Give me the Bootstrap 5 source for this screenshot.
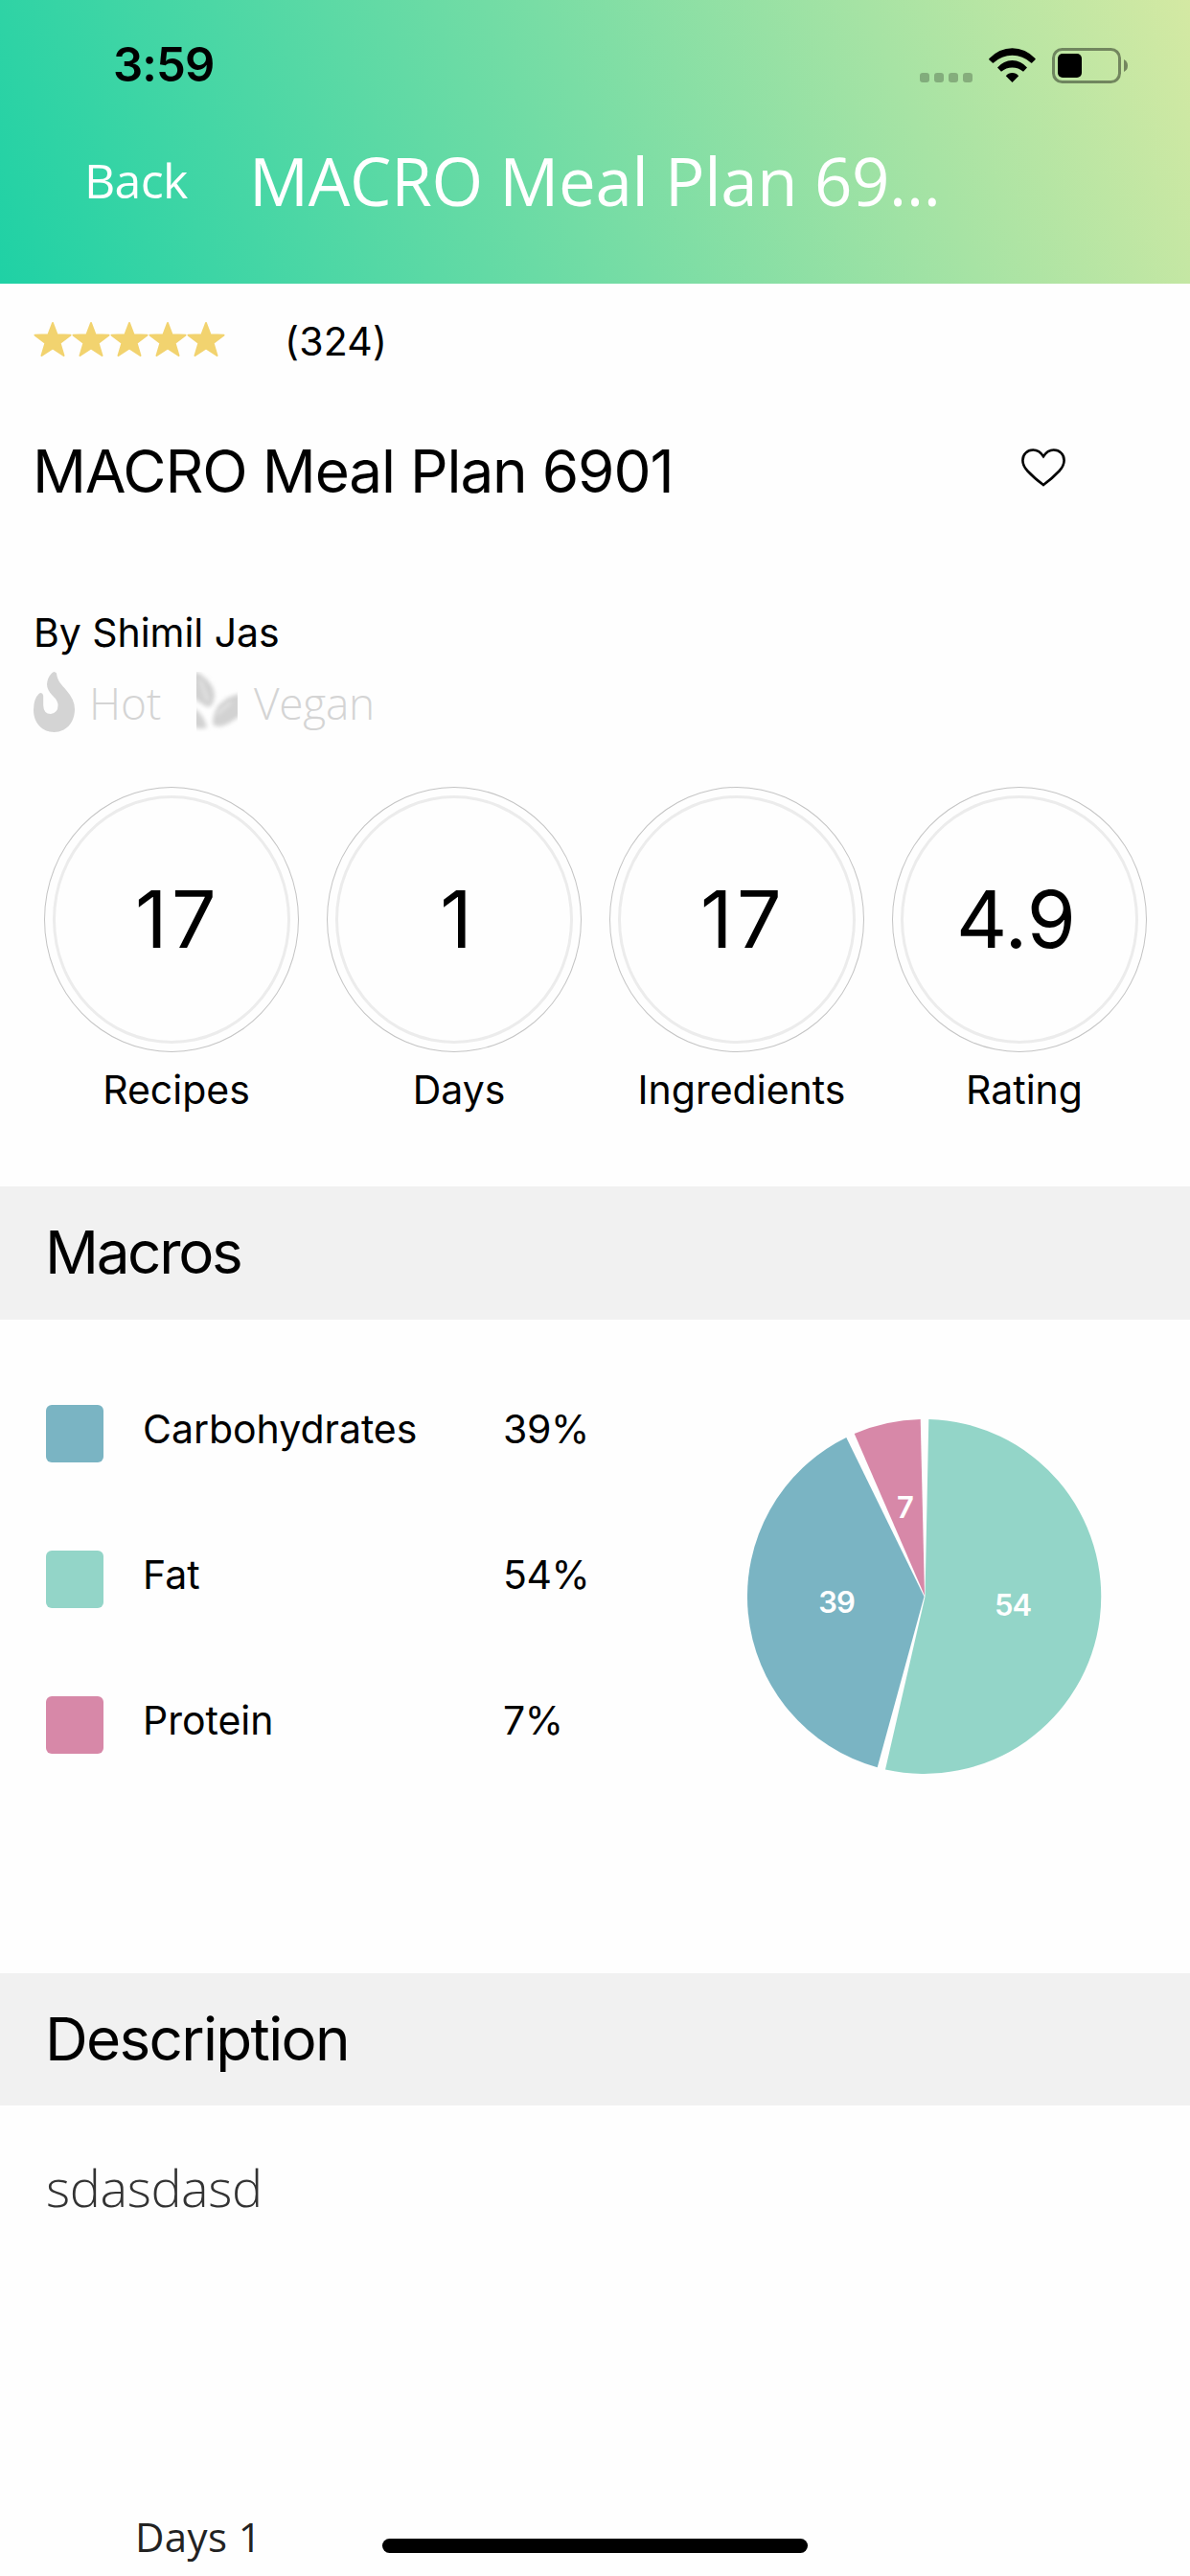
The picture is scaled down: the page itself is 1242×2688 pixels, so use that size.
<!DOCTYPE html>
<html lang="en">
<head>
<meta charset="utf-8">
<meta name="viewport" content="width=device-width, initial-scale=1">
<title>MACRO Meal Plan 6901</title>
<link href="https://cdn.jsdelivr.net/npm/bootstrap@5.3.0/dist/css/bootstrap.min.css" rel="stylesheet">
<style>
  body { width: 1242px; height: 2688px; overflow: hidden; background: #fefefe; color: #000; font-family: Inter, "Liberation Sans", sans-serif; font-size: 41px; line-height: 60px; }
  svg { display: block; flex: none; }
  .open { font-family: "Open Sans", "Noto Sans", sans-serif; }
  .app-header { height: 296px; background: linear-gradient(68deg, #1fd1a5 0%, #79dda5 50%, #d4e9a3 100%); }
  .status-bar { height: 136px; padding: 0 65px 0 118px; }
  .clock { font-size: 49px; font-weight: 600; letter-spacing: -.87px; }
  .signals { height: 37px; }
  .nav-line { height: 104px; padding-left: 88px; color: #fff; }
  .back-link { width: 172px; font-size: 50px; letter-spacing: -.68px; color: #fff; text-decoration: none; }
  .nav-title { width: 740px; font-size: 69px; letter-spacing: -.34px; line-height: 104px; }
  .rating-row { height: 120px; padding-left: 35px; }
  .rating-count { margin-left: 62px; letter-spacing: .2px; }
  .title-row { height: 151px; padding: 0 130px 0 34px; }
  .plan-title { font-size: 62px; font-weight: 400; letter-spacing: -1.15px; line-height: 80px; }
  .author { margin-top: 63px; padding-left: 35px; letter-spacing: -.05px; }
  .tag-row { margin-top: 11px; padding-left: 35px; height: 63px; color: #d4d4d4; font-size: 46px; font-weight: 300; }
  .tag-hot { width: 112px; margin-left: 15px; }
  .tag-vegan { margin-left: 17px; letter-spacing: -.27px; }
  .stats { margin-top: 57px; padding-left: 46px; gap: 29px; }
  .stat-cell { width: 266px; }
  .ring { width: 266px; height: 277px; border: 1px solid #c4c4c4; border-radius: 50%; padding: 8px; }
  .ring-inner { border: 3px solid #ececec; border-radius: 50%; font-size: 82.5px; padding-bottom: 2px; }
  .num-17 { letter-spacing: 4.4px; padding-left: 13px; }
  .num-1 { padding-left: 4px; }
  .num-49 { padding-right: 7px; }
  .stat-label { margin-top: 9px; padding-left: 10px; }
  .section-bar { background: #f1f1f1; padding-left: 47px; font-size: 62px; font-weight: 400; }
  .bar-macros { margin-top: 71px; height: 139px; letter-spacing: -2.35px; }
  .bar-description { height: 138px; letter-spacing: -1.68px; }
  .macros { height: 682px; padding: 89px 91px 0 48px; }
  .legend { gap: 92px; }
  .swatch { width: 60px; height: 60px; border-radius: 6px; margin-right: 41px; }
  .macro-name { width: 376px; margin-top: -10px; letter-spacing: -.03px; }
  .macro-value { margin-top: -10px; letter-spacing: -.4px; }
  .swatch-carbs { background: #7ab4c3; }
  .swatch-fat { background: #93d5c8; }
  .swatch-protein { background: #d788a8; }
  .pie { margin-top: 14px; font-size: 31px; font-weight: 600; letter-spacing: -1px; }
  .plan-text { margin-top: 45px; padding-left: 48px; font-size: 54px; font-weight: 300; letter-spacing: -.42px; line-height: 80px; color: #333; }
  .day-tab { margin-top: 295px; padding-left: 141px; font-size: 42px; letter-spacing: .4px; color: #222; }
  .home-indicator { width: 444px; height: 15px; bottom: 24px; background: #000; }
</style>
<script src="https://cdn.jsdelivr.net/npm/bootstrap@5.3.0/dist/js/bootstrap.bundle.min.js"></script>
</head>
<body class="position-relative">
<header class="app-header">
  <div class="status-bar d-flex align-items-center justify-content-between">
    <div class="clock">3:59</div>
    <div class="signals">
      <svg width="217" height="37" viewBox="0 0 217 37">
        <g fill="#000" fill-opacity=".24">
          <rect x="0" y="26" width="10" height="10" rx="3"/><rect x="15" y="26" width="10" height="10" rx="3"/>
          <rect x="30" y="26" width="10" height="10" rx="3"/><rect x="45" y="26" width="10" height="10" rx="3"/>
        </g>
        <path d="M72.2 12.2Q72 11.600 72.500 11Q83 .3 96.500 .3T120.500 11Q121 11.600 120.500 12.200L117.200 15.600Q116.500 16 116 15.600Q107.500 7.800 96.500 7.800T77 15.600Q76.500 16 75.800 15.600ZM81 20.600Q87.500 13 96.500 13T112 20.600L108 24.800Q103 20.500 96.500 20.500T85 24.800ZM89.800 29.200Q92.500 26 96.500 26T103.200 29.200L96.500 36Z"/>
        <rect x="139.500" y="1.500" width="69" height="34" rx="9" fill="none" stroke="#000" stroke-opacity=".42" stroke-width="3"/>
        <rect x="144" y="6" width="25" height="25" rx="5"/>
        <path d="M213 12Q217 14 217 18.500T213 25Z" fill-opacity=".42"/>
      </svg>
    </div>
  </div>
  <nav class="nav-line d-flex align-items-center open">
    <a class="back-link" href="#">Back</a>
    <div class="nav-title text-nowrap">MACRO Meal Plan 69...</div>
  </nav>
</header>

<main>
  <div class="rating-row d-flex align-items-center">
    <svg class="mb-1" width="200" height="38" viewBox="0 0 200 38" fill="#f2d36f" stroke="#f2d36f" stroke-width="2" stroke-linejoin="round">
      <defs><path id="star" d="M20 2L24.600 14.300L38.500 14.700L27.600 23L31.500 36L20 28.400L8.500 36L12.400 23L1.500 14.700L15.400 14.300Z"/></defs>
      <use href="#star"/><use href="#star" x="40"/><use href="#star" x="80"/><use href="#star" x="120"/><use href="#star" x="160"/>
    </svg>
    <div class="rating-count">(324)</div>
  </div>

  <div class="title-row d-flex align-items-center justify-content-between">
    <h1 class="plan-title m-0">MACRO Meal Plan 6901</h1>
    <svg class="mb-2" width="46" height="40" viewBox="0 0 46 40" fill="none" stroke="#000" stroke-width="2.600">
      <path d="M23 38Q13 30.500 6.500 23.500Q1.400 18 1.400 12.500Q1.400 7.500 4.500 4.600Q7.500 1.500 12.300 1.500Q18.700 1.500 23 8.200Q27.300 1.500 33.700 1.500Q38.500 1.500 41.500 4.600Q44.600 7.500 44.600 12.500Q44.600 18 39.500 23.500Q33 30.500 23 38Z"/>
    </svg>
  </div>

  <div class="author">By Shimil Jas</div>
  <div class="tag-row d-flex align-items-center open">
    <svg width="43" height="63" viewBox="0 0 43 63" fill="#d4d4d4">
      <path d="M19 1.500Q21.500 -1.500 24 1.500C25 10 29 13 34 19Q43 29 43 39C43 54 33 63 21.500 63S0 54 0 40Q0 28 6 22.500Q9.500 21 10.200 25V35Q10.500 44 18 44Q25.500 43 25.500 35Q25.500 30 20 25Q14 19 14 13Q14.500 6 19 1.500Z"/>
    </svg>
    <span class="tag-hot">Hot</span>
    <svg width="43" height="63" viewBox="0 0 43 63">
      <defs><filter id="soft" x="-10%" y="-10%" width="120%" height="120%"><feGaussianBlur stdDeviation="2"/></filter></defs>
      <g filter="url(#soft)" fill="#d2d2d2">
        <path d="M-4 0L2 1Q19 12 19 25Q18 36 12 37Q2 32 -4 26Z"/>
        <path d="M46 23Q34 24 23 35Q17 44 17 55Q24 60 35 53L46 46Z"/>
        <path d="M-4 37Q8 44 11 58Q4 61 -4 57Z"/>
      </g>
      <path d="M22 44L36 32M4 9L12 30" stroke="#ececec" stroke-width="2" fill="none" filter="url(#soft)"/>
    </svg>
    <span class="tag-vegan">Vegan</span>
  </div>

  <div class="stats d-flex text-center">
    <div class="stat-cell"><div class="ring d-flex"><div class="ring-inner num-17 flex-fill d-flex align-items-center justify-content-center">17</div></div><div class="stat-label">Recipes</div></div>
    <div class="stat-cell"><div class="ring d-flex"><div class="ring-inner num-1 flex-fill d-flex align-items-center justify-content-center">1</div></div><div class="stat-label">Days</div></div>
    <div class="stat-cell"><div class="ring d-flex"><div class="ring-inner num-17 flex-fill d-flex align-items-center justify-content-center">17</div></div><div class="stat-label">Ingredients</div></div>
    <div class="stat-cell"><div class="ring d-flex"><div class="ring-inner num-49 flex-fill d-flex align-items-center justify-content-center">4.9</div></div><div class="stat-label">Rating</div></div>
  </div>

  <h2 class="section-bar bar-macros d-flex align-items-center mb-0">Macros</h2>
  <section class="macros d-flex justify-content-between align-items-start">
    <div class="legend d-flex flex-column">
      <div class="d-flex align-items-center"><span class="swatch swatch-carbs"></span><span class="macro-name">Carbohydrates</span><span class="macro-value">39%</span></div>
      <div class="d-flex align-items-center"><span class="swatch swatch-fat"></span><span class="macro-name">Fat</span><span class="macro-value">54%</span></div>
      <div class="d-flex align-items-center"><span class="swatch swatch-protein"></span><span class="macro-name">Protein</span><span class="macro-value">7%</span></div>
    </div>
    <svg class="pie" width="372" height="372" viewBox="-186 -186 372 372">
      <path fill="#93d5c8" d="M.5 0L4.300 -185A185 185 0 1 1 -41 180.500Z"/>
      <path fill="#7ab4c3" d="M-.5 0L-49.300 178.300A185 185 0 0 1 -81.700 -166Z"/>
      <path fill="#d788a8" d="M0 -1L-73.300 -170A185 185 0 0 1 -4.300 -185Z"/>
      <g fill="#fff" text-anchor="middle"><text x="92" y="20">54</text><text x="-92" y="17">39</text><text x="-20.500" y="-82">7</text></g>
    </svg>
  </section>

  <h2 class="section-bar bar-description d-flex align-items-center mb-0">Description</h2>
  <p class="plan-text open mb-0">sdasdasd</p>
  <div class="day-tab open">Days 1</div>
</main>
<div class="home-indicator position-absolute start-50 translate-middle-x rounded-pill"></div>
</body>
</html>
